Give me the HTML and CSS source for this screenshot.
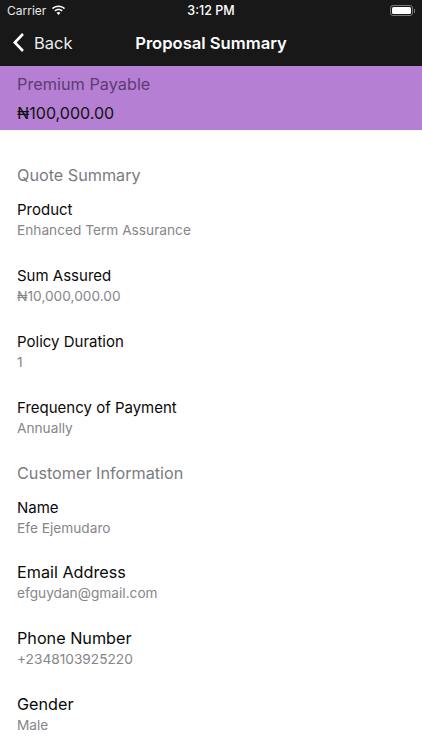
FILE: index.html
```html
<!DOCTYPE html>
<html lang="en">
<head>
<meta charset="utf-8">
<title>Proposal Summary</title>
<link rel="stylesheet" href="styles.css">
</head>
<body>
<header class="top">
  <div class="status">
    <div class="status-left">
      <span>Carrier</span>
      <svg class="wifi" width="15" height="11" viewBox="0 0 16 12"><path d="M8 2.200c2.300 0 4.400.9 6 2.400l1.100-1.200C13.200 1.600 10.700.5 8 .5S2.800 1.600.9 3.400L2 4.600c1.600-1.500 3.700-2.400 6-2.400z" fill="#fff"/><path d="M8 5.800c1.300 0 2.500.5 3.400 1.300l1.200-1.200C11.400 4.800 9.800 4.100 8 4.100s-3.400.7-4.600 1.800l1.200 1.200c.9-.8 2.100-1.300 3.400-1.300z" fill="#fff"/><path d="M8 7.700c-.8 0-1.500.3-2.100.8L8 10.800l2.100-2.300c-.6-.5-1.300-.8-2.100-.8z" fill="#fff"/></svg>
    </div>
    <span class="clock">3:12 PM</span>
    <div class="battery"><span class="battery-body"><span class="battery-fill"></span></span><span class="battery-cap"></span></div>
  </div>
  <nav class="nav">
    <div class="back">
      <svg width="13" height="21" viewBox="0 0 13 21"><path d="M11 2 2.800 10.500 11 19" fill="none" stroke="#fff" stroke-width="2.600"/></svg>
      <span>Back</span>
    </div>
    <h1 class="title">Proposal Summary</h1>
  </nav>
</header>
<section class="premium">
  <div class="premium-label">Premium Payable</div>
  <div class="premium-value">₦100,000.00</div>
</section>
<main class="content">
  <h2 class="section">Quote Summary</h2>
  <div class="field"><div class="name">Product</div><div class="value">Enhanced Term Assurance</div></div>
  <div class="field"><div class="name">Sum Assured</div><div class="value">₦10,000,000.00</div></div>
  <div class="field"><div class="name">Policy Duration</div><div class="value">1</div></div>
  <div class="field"><div class="name">Frequency of Payment</div><div class="value">Annually</div></div>
  <h2 class="section section-second">Customer Information</h2>
  <div class="field"><div class="name">Name</div><div class="value">Efe Ejemudaro</div></div>
  <div class="field large tight"><div class="name">Email Address</div><div class="value">efguydan@gmail.com</div></div>
  <div class="field large"><div class="name">Phone Number</div><div class="value">+2348103925220</div></div>
  <div class="field large"><div class="name">Gender</div><div class="value">Male</div></div>
</main>
</body>
</html>
```
FILE: styles.css
```css
* { box-sizing: border-box; }
html, body { margin: 0; height: 100%; }
body {
  width: 422px;
  height: 750px;
  overflow: hidden;
  background: #fff;
  font-family: Inter, "Liberation Sans", sans-serif;
  color: #000;
}
.top { background: #181818; color: #fff; height: 66px; }
.status {
  height: 21px;
  display: flex;
  align-items: center;
  justify-content: space-between;
  padding: 0 7px 0 7px;
  position: relative;
  font-size: 12px;
  color: #e8e8e8;
}
.status-left { display: flex; align-items: center; gap: 5px; }
.clock { position: absolute; left: 0; right: 0; text-align: center; font-weight: 500; color: #fff; font-size: 12.500px; }
.battery { display: flex; align-items: center; }
.battery-body { width: 23px; height: 11px; border: 1px solid #777; border-radius: 3px; padding: 1px; display: flex; }
.battery-fill { flex: 1; background: #fff; border-radius: 1.500px; }
.battery-cap { width: 1px; height: 4px; background: #777; margin-left: 1px; }
.nav { height: 45px; display: flex; align-items: center; position: relative; padding: 0 0 2px 12px; }
.back { display: flex; align-items: center; gap: 9px; font-size: 16.500px; color: #ececec; }
.title { position: absolute; left: 0; right: 0; margin: 0; text-align: center; font-size: 16.600px; font-weight: 600; }
.premium { background: #b57fd3; height: 64px; padding: 8px 17px 0; }
.premium-label { font-size: 16.300px; line-height: 20px; color: #5f3a74; }
.premium-value { font-size: 16px; line-height: 22px; margin-top: 8px; color: #111; }
.content { padding: 35px 17px 0; }
.section { margin: 0; font-size: 16.200px; line-height: 20px; font-weight: 400; color: #7b7b7f; }
.section-second { margin-top: 26px; }
.field { margin-top: 16px; }
.field + .field { margin-top: 28px; }
.name { font-size: 15px; line-height: 18px; color: #0a0a0a; }
.value { font-size: 13.700px; line-height: 18px; margin-top: 2px; color: #86868a; }
.field + .large { margin-top: 26px; }
.field + .tight { margin-top: 25px; }
.large .name { font-size: 16.200px; line-height: 20px; }
.large .value { margin-top: 2px; }
```
